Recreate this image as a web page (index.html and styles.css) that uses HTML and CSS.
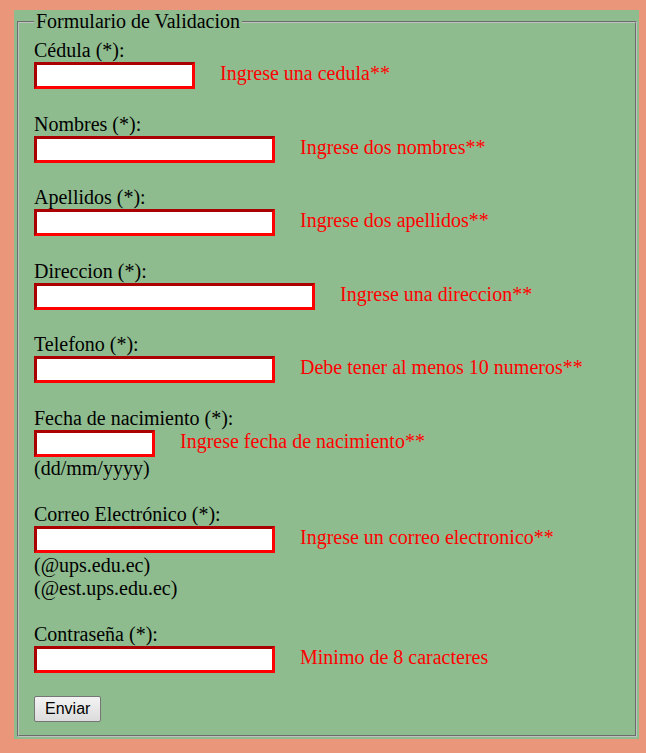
FILE: index.html
```html
<!DOCTYPE html>
<html lang="es">
<head>
<meta charset="utf-8">
<title>Formulario de Validacion</title>
<link rel="stylesheet" href="styles.css">
</head>
<body>
<div class="panel">
  <form class="form" onsubmit="return false">
    <fieldset class="box">
      <legend class="legend">Formulario de Validacion</legend>

      <div class="field">
        <div class="label">Cédula (*):</div>
        <div class="row"><input class="inp w161" type="text"><span class="msg">Ingrese una cedula**</span></div>
      </div>

      <div class="field">
        <div class="label">Nombres (*):</div>
        <div class="row"><input class="inp w241" type="text"><span class="msg">Ingrese dos nombres**</span></div>
      </div>

      <div class="field">
        <div class="label">Apellidos (*):</div>
        <div class="row"><input class="inp w241" type="text"><span class="msg">Ingrese dos apellidos**</span></div>
      </div>

      <div class="field">
        <div class="label">Direccion (*):</div>
        <div class="row"><input class="inp w281" type="text"><span class="msg">Ingrese una direccion**</span></div>
      </div>

      <div class="field">
        <div class="label">Telefono (*):</div>
        <div class="row"><input class="inp w241" type="text"><span class="msg">Debe tener al menos 10 numeros**</span></div>
      </div>

      <div class="field">
        <div class="label">Fecha de nacimiento (*):</div>
        <div class="row"><input class="inp w121" type="text"><span class="msg">Ingrese fecha de nacimiento**</span></div>
        <div class="label">(dd/mm/yyyy)</div>
      </div>

      <div class="field">
        <div class="label">Correo Electrónico (*):</div>
        <div class="row"><input class="inp w241" type="text"><span class="msg">Ingrese un correo electronico**</span></div>
        <div class="label">(@ups.edu.ec)</div>
        <div class="label">(@est.ups.edu.ec)</div>
      </div>

      <div class="field">
        <div class="label">Contraseña (*):</div>
        <div class="row"><input class="inp w241" type="password"><span class="msg">Minimo de 8 caracteres</span></div>
      </div>

      <div class="actions"><button class="btn" type="submit">Enviar</button></div>
    </fieldset>
  </form>
</div>
</body>
</html>
```

FILE: styles.css
```css
html, body {
  margin: 0;
  padding: 0;
}

body {
  background: #e9967a;
  height: 753px;
  overflow: hidden;
  font-family: "Liberation Serif", "Times New Roman", serif;
  font-size: 20px;
  color: #000;
}

.panel {
  margin: 10px 7px 0 14px;
  padding: 0 2px 2px 3px;
  background: #8fbc8f;
}

.form {
  margin: 0;
}

.box {
  margin: 0;
  padding: 6px 15px 12.5px 15px;
  border: 2px groove #c0c0c0;
  min-width: 0;
}

.legend {
  padding: 0 2px;
  line-height: 23px;
  font-size: 20px;
}

.field {
  margin-bottom: 23px;
}

.label {
  line-height: 23px;
  height: 23px;
  white-space: nowrap;
}

.row {
  display: flex;
  align-items: flex-start;
  gap: 25px;
  height: 27.5px;
}

.inp {
  box-sizing: border-box;
  height: 27px;
  margin: 0;
  padding: 1px 2px;
  border: 3px solid #ff0000;
  border-color: #aa0000 #ff0000 #ff0000 #aa0000;
  background: #fff;
  font-family: "Liberation Sans", Arial, sans-serif;
  font-size: 13.33px;
  outline: none;
}

.w121 { width: 121px; }
.w161 { width: 161px; }
.w241 { width: 241px; }
.w281 { width: 281px; }

.msg {
  color: #ff0000;
  line-height: 23px;
  white-space: nowrap;
}

.actions {
  display: flex;
}

.btn {
  box-sizing: border-box;
  height: 26px;
  padding: 0 10px;
  margin: 0;
  border: 1px solid #767676;
  border-radius: 2px;
  background: linear-gradient(#f3f3f3, #dcdcdc);
  font-family: "Liberation Sans", Arial, sans-serif;
  font-size: 16px;
  color: #000;
  line-height: 22px;
}
```
